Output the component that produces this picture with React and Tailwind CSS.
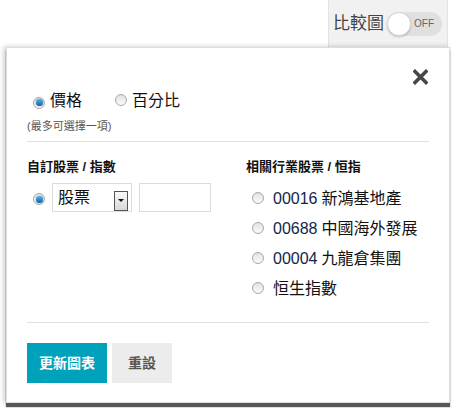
import React from 'react';

const font = { fontFamily: '"Liberation Sans", "Noto Sans CJK TC", sans-serif' };

function Radio({ checked }) {
  return (
    <span className="relative inline-flex h-[12px] w-[12px] shrink-0 items-center justify-center rounded-full border border-[#a8a8a8] bg-gradient-to-b from-[#e2e2e2] to-[#fbfbfb]">
      {checked && (
        <span className="h-[7px] w-[7px] rounded-full bg-gradient-to-b from-[#4fb6ef] to-[#0b5fa8] shadow-[0_0_1px_#0b3f78]" />
      )}
    </span>
  );
}

const related = [
  { code: '00016', name: '新鴻基地產' },
  { code: '00688', name: '中國海外發展' },
  { code: '00004', name: '九龍倉集團' },
  { code: '', name: '恒生指數' },
];

export default function App() {
  return (
    <div className="h-[416px] w-[455px] overflow-hidden bg-white" style={font}>
      <div className="flex justify-end pr-[7px]">
        <div className="flex h-[47px] w-[120px] items-center gap-[3px] border-x border-[#e2e2e2] bg-[#f1f1f1] pl-[4px]">
          <span className="text-[17px] leading-none text-[#444]">比較圖</span>
          <div className="relative flex h-[24px] w-[55px] items-center rounded-full bg-[#e0e0e0]">
            <span className="absolute left-0 top-0 h-[24px] w-[24px] rounded-full border border-[#d6d6d6] bg-white shadow-[0_1px_2px_rgba(0,0,0,0.2)]" />
            <span className="ml-[27px] text-[10px] leading-none text-[#666]">OFF</span>
          </div>
        </div>
      </div>

      <div className="relative ml-[6px] mr-[5px] h-[356px] border border-[#dcdcdc] bg-white px-[20px] pt-[43px] shadow-[0_4px_1px_#575757,-2px_0_5px_rgba(0,0,0,0.22)]">
        <button type="button" className="absolute right-[21px] top-[21px] h-[16px] w-[15px]">
          <svg viewBox="0 0 15 16" className="h-[16px] w-[15px]">
            <path d="M2 2.5 L13 13.5 M13 2.5 L2 13.5" stroke="#474747" strokeWidth="3.6" strokeLinecap="square" />
          </svg>
        </button>

        <div className="flex h-[20px] items-center text-[16px] leading-none text-[#111]">
          <label className="flex items-center">
            <span className="ml-[6px] mr-[5px]"><Radio checked /></span>
            價格
          </label>
          <label className="ml-[33px] flex items-center">
            <span className="mr-[5px]"><Radio /></span>
            百分比
          </label>
        </div>
        <p className="mt-[10px] text-[11px] leading-none text-[#555]">(最多可選擇一項)</p>
        <div className="mt-[9px] border-t border-[#e0e0e0]" />

        <div className="grid grid-cols-[219px_1fr] pt-[18px]">
          <div>
            <h3 className="text-[13px] font-bold leading-none text-[#111]">自訂股票 / 指數</h3>
            <div className="mt-[10px] flex items-center">
              <span className="ml-[6px] mr-[7px]"><Radio checked /></span>
              <div className="flex h-[29px] w-[80px] items-center justify-between border border-[#dcdcdc] pl-[5px] pr-[3px]">
                <span className="text-[16px] leading-none text-[#111]">股票</span>
                <span className="mt-[6px] flex h-[20px] w-[14px] items-center justify-center border border-[#555] bg-gradient-to-b from-[#fafafa] to-[#d8d8d8]">
                  <span className="h-0 w-0 border-x-[3px] border-t-[3px] border-x-transparent border-t-[#111]" />
                </span>
              </div>
              <div className="ml-[7px] h-[29px] w-[72px] border border-[#dcdcdc]" />
            </div>
          </div>
          <div>
            <h3 className="text-[13px] font-bold leading-none text-[#111]">相關行業股票 / 恒指</h3>
            <ul className="mt-[16px] flex flex-col gap-[10px]">
              {related.map((r) => (
                <li key={r.name} className="flex h-[20px] items-center text-[16px] leading-none">
                  <span className="ml-[6px] mr-[9px]"><Radio /></span>
                  {r.code && <span className="mr-[4px] text-[#13254a]">{r.code}</span>}
                  <span className="text-[#111]">{r.name}</span>
                </li>
              ))}
            </ul>
          </div>
        </div>

        <div className="mt-[23px] border-t border-[#e0e0e0]" />
        <div className="mt-[20px] flex gap-[5px]">
          <button type="button" className="h-[40px] w-[80px] bg-[#00a1ba] text-[14px] font-bold text-white">更新圖表</button>
          <button type="button" className="h-[40px] w-[60px] bg-[#ececec] text-[14px] font-bold text-[#555]">重設</button>
        </div>
      </div>
    </div>
  );
}
